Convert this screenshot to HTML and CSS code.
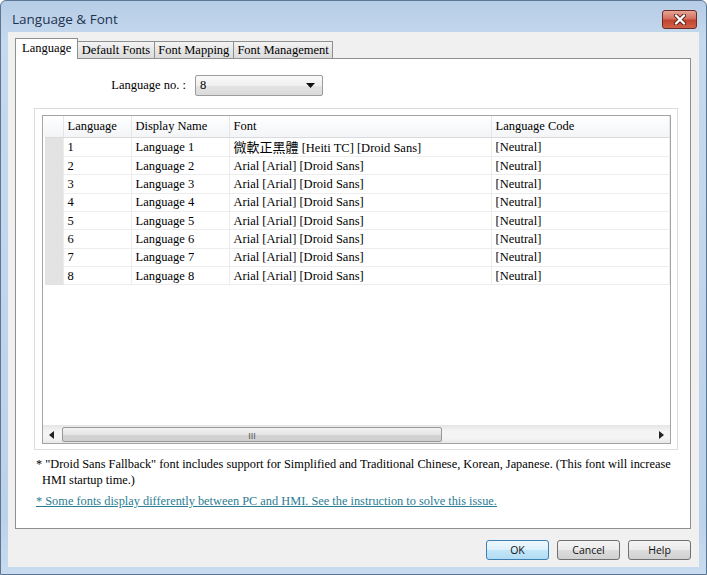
FILE: index.html
```html
<!DOCTYPE html>
<html>
<head>
  <title>Language &amp; Font</title>
  <link rel="stylesheet" href="styles.css">
</head>
<body>
  <div class="window">
    <div class="titlebar">
      <span class="title">Language &amp; Font</span>
      <button class="close-btn">
        <svg width="14" height="11" viewBox="0 0 14 11">
          <path d="M3 1.5 L11 9.5 M11 1.5 L3 9.5" stroke="#5a1f1a" stroke-width="4" stroke-linecap="round"/>
          <path d="M3 1.5 L11 9.5 M11 1.5 L3 9.5" stroke="#fff" stroke-width="2.4" stroke-linecap="round"/>
        </svg>
      </button>
    </div>

    <div class="client">
      <div class="tabs">
        <div class="tab active">Language</div>
        <div class="tab">Default Fonts</div>
        <div class="tab">Font Mapping</div>
        <div class="tab">Font Management</div>
      </div>

      <div class="panel">
        <div class="lang-no">
          <label for="langno">Language no. :</label>
          <div class="combo" id="langno">
            <span>8</span>
            <svg width="9" height="5" viewBox="0 0 9 5"><path d="M0 0 H9 L4.5 5 Z" fill="#111"/></svg>
          </div>
        </div>

        <div class="group">
          <div class="list">
            <table>
              <colgroup>
                <col class="c-head">
                <col class="c-lang">
                <col class="c-name">
                <col class="c-font">
                <col>
              </colgroup>
              <tr class="header">
                <th></th>
                <th>Language</th>
                <th>Display Name</th>
                <th>Font</th>
                <th>Language Code</th>
              </tr>
              <tr><td class="rowhead"></td><td>1</td><td>Language 1</td><td><span class="cjk">微軟正黑體</span> [Heiti TC] [Droid Sans]</td><td>[Neutral]</td></tr>
              <tr><td class="rowhead"></td><td>2</td><td>Language 2</td><td>Arial [Arial] [Droid Sans]</td><td>[Neutral]</td></tr>
              <tr><td class="rowhead"></td><td>3</td><td>Language 3</td><td>Arial [Arial] [Droid Sans]</td><td>[Neutral]</td></tr>
              <tr><td class="rowhead"></td><td>4</td><td>Language 4</td><td>Arial [Arial] [Droid Sans]</td><td>[Neutral]</td></tr>
              <tr><td class="rowhead"></td><td>5</td><td>Language 5</td><td>Arial [Arial] [Droid Sans]</td><td>[Neutral]</td></tr>
              <tr><td class="rowhead"></td><td>6</td><td>Language 6</td><td>Arial [Arial] [Droid Sans]</td><td>[Neutral]</td></tr>
              <tr><td class="rowhead"></td><td>7</td><td>Language 7</td><td>Arial [Arial] [Droid Sans]</td><td>[Neutral]</td></tr>
              <tr><td class="rowhead"></td><td>8</td><td>Language 8</td><td>Arial [Arial] [Droid Sans]</td><td>[Neutral]</td></tr>
            </table>
            <div class="list-fill"></div>
            <!-- horizontal scrollbar -->
            <div class="hscroll">
              <div class="arrow"><svg width="5" height="8" viewBox="0 0 5 8"><path d="M5 0 V8 L0 4 Z" fill="#222"/></svg></div>
              <div class="track">
                <div class="thumb"><span class="grip">III</span></div>
              </div>
              <div class="arrow"><svg width="5" height="8" viewBox="0 0 5 8"><path d="M0 0 V8 L5 4 Z" fill="#222"/></svg></div>
            </div>
          </div>
        </div>

        <p class="note">* "Droid Sans Fallback" font includes support for Simplified and Traditional Chinese, Korean, Japanese. (This font will increase<br>HMI startup time.)</p>
        <a class="link" href="#">* Some fonts display differently between PC and HMI. See the instruction to solve this issue.</a>
      </div>

      <div class="buttons">
        <button class="btn default">OK</button>
        <button class="btn">Cancel</button>
        <button class="btn">Help</button>
      </div>
    </div>
  </div>
</body>
</html>
```

FILE: styles.css
```css
body {
  margin: 0;
  font-family: "Liberation Serif", "Noto Sans CJK TC", serif;
  font-size: 12.5px;
  color: #000;
}
.window {
  width: 707px;
  height: 575px;
  box-sizing: border-box;
  display: flex;
  flex-direction: column;
  padding: 0 7px 7px;
  border: 1px solid #5b7592;
  border-radius: 6px 6px 0 0;
  background: linear-gradient(#b6cde6, #c6d9ee 40px, #bcd2ea 90%, #c8dbef);
}
.titlebar {
  height: 31px;
  display: flex;
  justify-content: space-between;
  align-items: flex-start;
  margin: 0 -7px;
  padding: 0 9px 0 11px;
}
.title {
  font-family: "Open Sans", sans-serif;
  font-size: 13.5px;
  color: #1e3350;
  margin-top: 9px;
}
.close-btn {
  width: 35px;
  height: 19px;
  margin-top: 9px;
  padding: 0;
  border: 1px solid #6b2c25;
  border-radius: 3px;
  background: linear-gradient(#e8a493, #d2705f 45%, #c2432f 55%, #d0624a);
  display: flex;
  align-items: center;
  justify-content: center;
}
.client {
  flex: 1;
  background: #f0f0f0;
  padding: 6px 8px 0 7px;
}

/* tabs */
.tabs {
  display: flex;
  align-items: flex-end;
  height: 21px;
  margin-bottom: -1px;
  position: relative;
  z-index: 1;
}
.tab {
  height: 17px;
  box-sizing: border-box;
  margin-bottom: 1px;
  padding: 0 3.5px;
  border: 1px solid #8e8f8f;
  border-bottom: none;
  border-left: none;
  background: linear-gradient(#f4f4f4, #e6e6e6 50%, #dcdcdc);
  line-height: 16px;
  white-space: nowrap;
}
.tab.active {
  height: 21px;
  margin-bottom: 0;
  padding: 0 6px;
  border-left: 1px solid #8e8f8f;
  background: #fff;
  line-height: 19px;
}
.panel {
  height: 471px;
  box-sizing: border-box;
  background: #fff;
  border: 1px solid #8e8f8f;
}

/* language no. row */
.lang-no {
  display: flex;
  align-items: center;
  margin-top: 16px;
  height: 21px;
}
.lang-no label {
  width: 170px;
  text-align: right;
  margin-right: 9px;
}
.combo {
  width: 128px;
  height: 21px;
  box-sizing: border-box;
  border: 1px solid #9c9c9c;
  border-radius: 2px;
  background: linear-gradient(#f9f9f9, #f0f0f0 50%, #e4e4e4 51%, #dadada);
  display: flex;
  align-items: center;
  justify-content: space-between;
  padding: 0 7px 0 4px;
}

/* group + list */
.group {
  width: 644px;
  height: 342px;
  box-sizing: border-box;
  margin: 12px 0 0 18px;
  border: 1px solid #dcdcdc;
  padding: 6px 6px 5px 7px;
}
.list {
  height: 100%;
  box-sizing: border-box;
  border: 1px solid #a3a3a3;
  display: flex;
  flex-direction: column;
}
table {
  width: 100%;
  table-layout: fixed;
  border-collapse: collapse;
}
.c-head { width: 19px; }
.c-lang { width: 68px; }
.c-name { width: 98px; }
.c-font { width: 262px; }
th, td {
  padding: 0 0 0 4px;
  text-align: left;
  font-weight: normal;
  white-space: nowrap;
  overflow: hidden;
  border-right: 1px solid #ececec;
}
th {
  height: 21px;
  background: linear-gradient(#fff, #f2f4f6);
  border-bottom: 1px solid #d8dadd;
  border-right: 1px solid #e4e6e8;
}
td {
  height: 16.33px;
  line-height: 15px;
  padding-top: 1px;
  border-bottom: 1px solid #ededed;
}
td.rowhead {
  background: #e3e3e3;
  border-left: 2px solid #fff;
  border-bottom: 1px solid #e3e3e3;
  padding: 0;
}
.cjk {
  font-family: "Noto Sans CJK TC", sans-serif;
  font-size: 13px;
  line-height: 15px;
}
.list-fill {
  flex: 1;
}
.hscroll {
  height: 17px;
  display: flex;
  background: linear-gradient(#e8e8e8, #f4f4f4 30%, #f4f4f4 70%, #e8e8e8);
  border-top: 1px solid #e6e6e6;
}
.arrow {
  width: 17px;
  display: flex;
  align-items: center;
  justify-content: center;
}
.track {
  flex: 1;
  padding: 1px 0;
}
.thumb {
  width: 378px;
  height: 13px;
  margin-left: 2px;
  border: 1px solid #989898;
  border-radius: 2px;
  background: linear-gradient(#f2f2f2, #e4e4e4 50%, #d3d3d3 51%, #cfcfcf);
  text-align: center;
}
.grip {
  font-family: "Liberation Sans", sans-serif;
  font-size: 9px;
  line-height: 13px;
  color: #555;
}

/* notes */
.note {
  margin: 6px 0 0 20px;
  padding-left: 6px;
  text-indent: -6px;
  font-size: 12.35px;
  line-height: 16px;
  white-space: nowrap;
}
.link {
  display: block;
  margin: 5px 0 0 20px;
  font-size: 12.35px;
  line-height: 16px;
  color: #2a7d92;
}

/* dialog buttons */
.buttons {
  display: flex;
  justify-content: flex-end;
  gap: 8px;
  margin-top: 11px;
}
.btn {
  width: 63px;
  height: 20px;
  padding: 0;
  border: 1px solid #707070;
  border-radius: 3px;
  background: linear-gradient(#f4f4f4, #ebebeb 50%, #dddddd 51%, #d0d0d0);
  font-family: "Open Sans", sans-serif;
  font-size: 10.5px;
  color: #111;
}
.btn.default {
  border-color: #3c7fb1;
  background: linear-gradient(#eef8fd, #dcf1fc 50%, #c3e6f8 51%, #b2dcf3);
}
```
